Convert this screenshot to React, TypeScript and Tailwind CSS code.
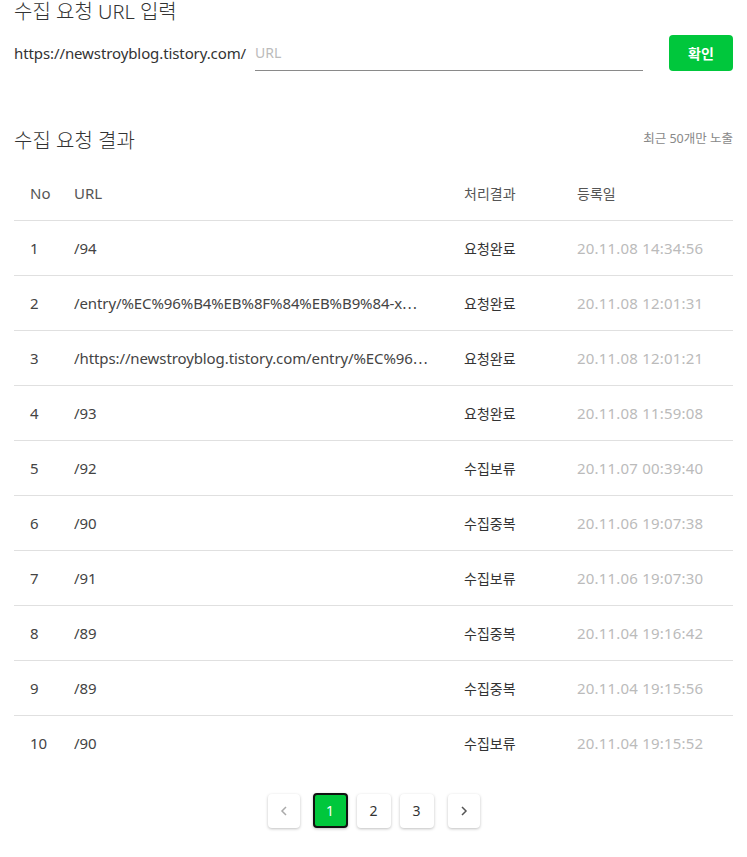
import React from "react";

const rows = [
  ["1", "/94", "", "요청완료", "20.11.08 14:34:56"],
  ["2", "/entry/%EC%96%B4%EB%8F%84%EB%B9%84-x", "⋯", "요청완료", "20.11.08 12:01:31"],
  ["3", "/https://newstroyblog.tistory.com/entry/%EC%96", "⋯", "요청완료", "20.11.08 12:01:21"],
  ["4", "/93", "", "요청완료", "20.11.08 11:59:08"],
  ["5", "/92", "", "수집보류", "20.11.07 00:39:40"],
  ["6", "/90", "", "수집중복", "20.11.06 19:07:38"],
  ["7", "/91", "", "수집보류", "20.11.06 19:07:30"],
  ["8", "/89", "", "수집중복", "20.11.04 19:16:42"],
  ["9", "/89", "", "수집중복", "20.11.04 19:15:56"],
  ["10", "/90", "", "수집보류", "20.11.04 19:15:52"],
];

const cjk = { fontFamily: '"Noto Sans CJK KR", sans-serif' };

export default function App() {
  return (
    <div
      className="w-[747px] bg-white text-[#333] px-[14px]"
      style={{ fontFamily: '"Noto Sans", "Noto Sans CJK KR", sans-serif' }}
    >
      <h2 className="text-[20px] font-light leading-[24px] text-[#333]">수집 요청 URL 입력</h2>
      <div className="flex items-center mt-[11px] h-[36px]">
        <span className="text-[15px] text-[#333] mr-[9px] tracking-[-0.1px]">https://newstroyblog.tistory.com/</span>
        <div className="w-[388px] h-[36px] border-b border-[#8a8a8a] flex items-center">
          <span className="text-[14px] text-[#bbb]">URL</span>
        </div>
        <button className="ml-auto w-[64px] h-[36px] rounded-[4px] bg-[#00c73c] text-white text-[14px] font-bold">
          확인
        </button>
      </div>

      <div className="flex items-end justify-between mt-[53px] h-[30px]">
        <h2 className="text-[20px] font-light leading-[26px] text-[#333]">수집 요청 결과</h2>
        <span className="text-[12.5px] text-[#888] mb-[5px]">최근 50개만 노출</span>
      </div>

      <div className="mt-[12px]">
        <div className="flex items-center h-[55px] border-b border-[#e0e0e0] text-[14px] text-[#555]">
          <div className="w-[60px] pl-[16px] text-[15px]">No</div>
          <div className="w-[390px] text-[15px]">URL</div>
          <div className="w-[113px]">처리결과</div>
          <div>등록일</div>
        </div>
        {rows.map((r, i) => (
          <div
            key={i}
            className={`flex items-center h-[55px] text-[15px] ${i < rows.length - 1 ? "border-b border-[#e0e0e0]" : ""}`}
          >
            <div className="w-[60px] pl-[16px] text-[#444]">{r[0]}</div>
            <div className="w-[390px] pr-[10px] whitespace-nowrap overflow-hidden text-[#444] tracking-[-0.1px]">
              {r[1]}
              {r[2] && <span style={cjk} className="text-[14px]">{r[2]}</span>}
            </div>
            <div className="w-[113px] text-[#333] text-[14px]">{r[3]}</div>
            <div className="text-[#bbb] tracking-[0.2px]">{r[4]}</div>
          </div>
        ))}
      </div>

      <div className="flex justify-center items-center gap-[9px] mt-[22px] pb-[29px]">
        <button className="w-[32px] h-[34px] rounded-[4px] bg-white shadow-[0_1px_3px_rgba(0,0,0,0.25)] flex items-center justify-center text-[#aaa]">
          <svg width="12" height="12" viewBox="0 0 12 12" fill="none" stroke="currentColor" strokeWidth="1.5">
            <path d="M8 2 L4 6 L8 10" />
          </svg>
        </button>
        <button className="w-[35px] h-[35px] ml-[4px] rounded-[4px] bg-[#00c73c] border-2 border-[#111] text-white text-[14px] flex items-center justify-center shadow-[0_1px_3px_rgba(0,0,0,0.25)]">
          1
        </button>
        <button className="w-[34px] h-[34px] rounded-[4px] bg-white shadow-[0_1px_3px_rgba(0,0,0,0.25)] text-[14px] text-[#333]">2</button>
        <button className="w-[34px] h-[34px] rounded-[4px] bg-white shadow-[0_1px_3px_rgba(0,0,0,0.25)] text-[14px] text-[#333]">3</button>
        <button className="w-[32px] h-[34px] ml-[5px] rounded-[4px] bg-white shadow-[0_1px_3px_rgba(0,0,0,0.25)] flex items-center justify-center text-[#555]">
          <svg width="12" height="12" viewBox="0 0 12 12" fill="none" stroke="currentColor" strokeWidth="1.5">
            <path d="M4 2 L8 6 L4 10" />
          </svg>
        </button>
      </div>
    </div>
  );
}
